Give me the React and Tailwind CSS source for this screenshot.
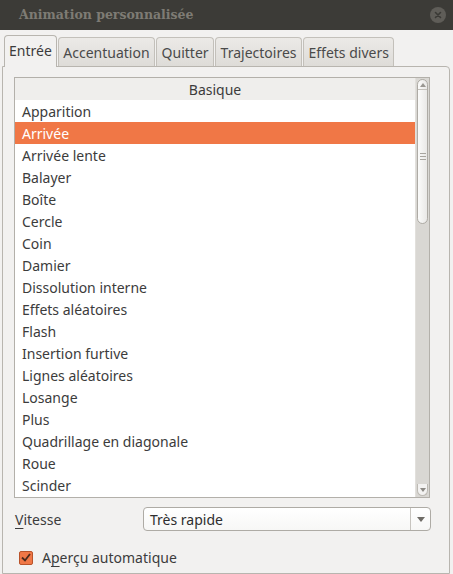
import React from "react";

const items = [
  "Apparition",
  "Arrivée",
  "Arrivée lente",
  "Balayer",
  "Boîte",
  "Cercle",
  "Coin",
  "Damier",
  "Dissolution interne",
  "Effets aléatoires",
  "Flash",
  "Insertion furtive",
  "Lignes aléatoires",
  "Losange",
  "Plus",
  "Quadrillage en diagonale",
  "Roue",
  "Scinder",
];

const tabs = ["Entrée", "Accentuation", "Quitter", "Trajectoires", "Effets divers"];

export default function App() {
  return (
    <div
      className="w-[453px] h-[574px] overflow-hidden bg-[#f2f1f0] flex flex-col text-[#3c3c3c]"
      style={{ fontFamily: '"Noto Sans", "Open Sans", sans-serif' }}
    >
      {/* Title bar */}
      <div className="h-[30px] shrink-0 bg-[#3c3b37] flex items-center justify-between pl-[19px] pr-[7px]">
        <span
          className="text-[12.5px] font-bold text-[#7e7b74]"
          style={{ fontFamily: '"DejaVu Serif", serif' }}
        >
          Animation personnalisée
        </span>
        <div className="w-[16px] h-[16px] rounded-full bg-[#5f5d58] flex items-center justify-center">
          <svg width="8" height="8" viewBox="0 0 8 8">
            <path d="M1.5 1.5 L6.5 6.5 M6.5 1.5 L1.5 6.5" stroke="#3a3935" strokeWidth="1.6" strokeLinecap="round" />
          </svg>
        </div>
      </div>

      {/* Tabs */}
      <div className="flex items-end pl-[4px] pt-[5px] h-[37px] shrink-0 relative z-10">
        {tabs.map((t, i) =>
          i === 0 ? (
            <div
              key={t}
              className="h-[32px] px-[4px] mr-[1px] flex items-center border border-b-0 border-[#b8b5af] rounded-t-[4px] bg-[#f2f1f0] text-[14px] text-[#3c3c3c] pb-[3px]"
            >
              {t}
            </div>
          ) : (
            <div
              key={t}
              className="h-[29px] px-[4.5px] mr-[1px] mb-[1px] flex items-center border border-b-0 border-[#c3c0ba] rounded-t-[4px] bg-gradient-to-b from-[#eceae7] to-[#dedcd8] text-[14px] text-[#4a4a4a]"
            >
              {t}
            </div>
          )
        )}
      </div>

      {/* Notebook panel */}
      <div className="ml-[2px] w-[448px] flex-1 border border-[#b8b5af] rounded-tr-[4px] -mt-[1px] bg-[#f2f1f0] px-[11px] pt-[10px] flex flex-col">
        {/* List */}
        <div className="w-[416px] h-[421px] border border-[#b3b0aa] bg-white flex">
          <div className="flex-1 flex flex-col">
            <div className="h-[22px] bg-[#efeeec] flex items-center justify-center text-[14px] text-[#3c3c3c]">
              Basique
            </div>
            {items.map((it, i) => (
              <div
                key={it}
                className={
                  "h-[22px] flex items-center pl-[7px] text-[14px] " +
                  (i === 1 ? "bg-[#f07746] text-white" : "text-[#3c3c3c]")
                }
              >
                {it}
              </div>
            ))}
          </div>
          {/* Scrollbar */}
          <div className="w-[14px] flex flex-col bg-[#d9d7d3] border-l border-[#e2e0dc]">
            <div className="mx-[1px] mt-[1px] flex flex-col rounded-[6px] border border-[#aeaba5] bg-gradient-to-r from-[#fbfbfa] to-[#e9e8e6]">
              <div className="h-[10px] flex items-center justify-center border-b border-[#c4c1bb]">
                <svg width="6" height="4" viewBox="0 0 6 4">
                  <path d="M0 4 L3 0 L6 4 Z" fill="#9a9792" />
                </svg>
              </div>
              <div className="h-[133px] flex items-center justify-center">
                <svg width="6" height="7" viewBox="0 0 6 7">
                  <path d="M0 0.5 H6 M0 3.5 H6 M0 6.5 H6" stroke="#a8a59f" strokeWidth="1" />
                </svg>
              </div>
            </div>
            <div className="flex-1" />
            <div className="mx-[1px] mb-[1px] h-[12px] rounded-b-[6px] border border-t-0 border-[#bdbab4] bg-[#f3f2f1] flex items-center justify-center">
              <svg width="6" height="4" viewBox="0 0 6 4">
                <path d="M0 0 L6 0 L3 4 Z" fill="#8d8a85" />
              </svg>
            </div>
          </div>
        </div>

        {/* Vitesse */}
        <div className="flex items-center mt-[9px] h-[24px]">
          <span className="w-[130px] text-[14px] text-[#3c3c3c] pl-[1px]">
            <span className="underline underline-offset-[3px]">V</span>itesse
          </span>
          <div className="ml-[-1px] w-[288px] h-[24px] rounded-[4px] border border-[#aeaba5] bg-gradient-to-b from-white to-[#f7f7f6] flex items-center">
            <span className="flex-1 pl-[6px] text-[14px] text-[#2e2e2e]">Très rapide</span>
            <div className="w-[20px] h-full border-l border-[#c7c4bf] flex items-center justify-center">
              <svg width="8" height="5" viewBox="0 0 8 5">
                <path d="M0 0 L8 0 L4 5 Z" fill="#6e6b66" />
              </svg>
            </div>
          </div>
        </div>

        {/* Checkbox */}
        <div className="flex items-center mt-[16px] pl-[5px]">
          <div className="w-[14px] h-[14px] rounded-[2px] border border-[#b9532a] bg-[#f07746] flex items-center justify-center">
            <svg width="10" height="9" viewBox="0 0 10 9">
              <path d="M1 4.5 L4 7.5 L9 1" stroke="#4a2a1c" strokeWidth="1.8" fill="none" />
            </svg>
          </div>
          <span className="ml-[9px] text-[14px] text-[#3c3c3c]">
            A<span className="underline underline-offset-[3px]">p</span>erçu automatique
          </span>
        </div>
      </div>
    </div>
  );
}
